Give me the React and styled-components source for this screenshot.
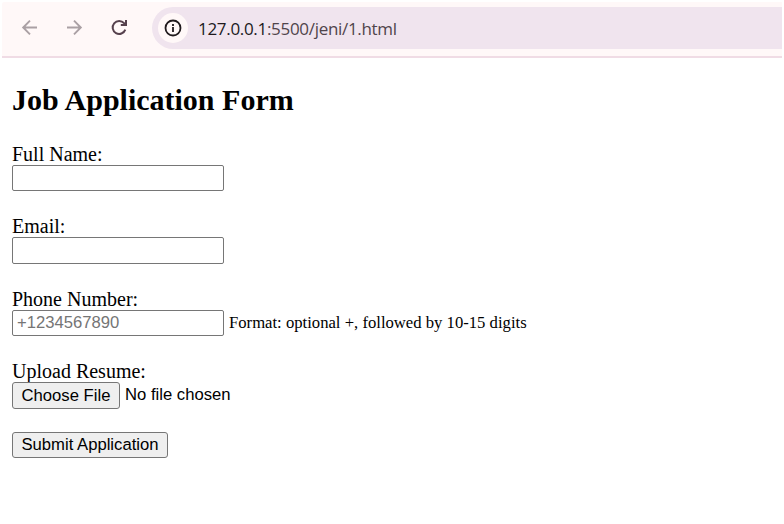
import React from "react";
import styled, { createGlobalStyle } from "styled-components";

const GlobalStyle = createGlobalStyle`
  * { box-sizing: border-box; }
  body { margin: 0; background: #fff; color: #000; overflow: hidden; }
`;

const Window = styled.div`
  width: 784px;
  height: 524px;
  padding: 2px 2px 0;
  background: #fff;
`;

const Toolbar = styled.header`
  display: flex;
  align-items: center;
  height: 56px;
  padding: 0 0 2px 18px;
  background: #fff8f8;
  border-bottom: 2px solid #f0dce5;
  border-top-left-radius: 2px;
`;

const NavButton = styled.button`
  display: grid;
  place-items: center;
  width: 20px;
  height: 20px;
  margin-right: ${(p) => p.$gap}px;
  padding: 0;
  border: 0;
  background: none;
  color: ${(p) => (p.$active ? "#56414d" : "#aaa0a4")};

  svg { display: block; }
`;

const AddressBar = styled.div`
  flex: 1;
  display: flex;
  align-items: center;
  height: 42px;
  padding-left: 6px;
  background: #f0e4ee;
  border-radius: 21px 0 0 21px;
`;

const SiteInfo = styled.span`
  display: grid;
  place-items: center;
  width: 30px;
  height: 30px;
  margin-right: 10px;
  border-radius: 50%;
  background: #fff8f8;
  color: #201a1d;
`;

const Url = styled.span`
  padding-top: 2px;
  font: 17px/24px "Open Sans", sans-serif;
  letter-spacing: -0.31px;
  color: #50444b;
  white-space: nowrap;
`;

const Host = styled.span`
  color: #201a1d;
`;

const Page = styled.main`
  padding: 25px 10px 0;
  font: 20px/23px "Liberation Serif", serif;
`;

const Title = styled.h2`
  margin: 0 0 25px;
  font-size: 30px;
  line-height: 34px;
  font-weight: 700;
`;

const Field = styled.div`
  height: ${(p) => p.$height}px;
`;

const Label = styled.label`
  display: block;
  height: 23px;
  line-height: 25px;
`;

const Row = styled.div`
  display: flex;
  align-items: center;
`;

const Input = styled.input`
  width: 212px;
  height: ${(p) => p.$height || 26}px;
  margin: 0;
  padding: 1px 4px;
  border: 1px solid #767676;
  border-radius: 2px;
  background: #fff;
  font: 16.67px "Liberation Sans", sans-serif;

  &::placeholder { color: #757575; opacity: 1; }
`;

const Hint = styled.small`
  margin: -2px 0 0 5px;
  font-size: 16.67px;
`;

const Button = styled.button`
  width: ${(p) => p.$width}px;
  height: ${(p) => p.$height}px;
  padding: 0;
  border: 1px solid #767676;
  border-radius: 3px;
  background: #efefef;
  color: #000;
  font: 16.67px/20px "Liberation Sans", sans-serif;
  white-space: nowrap;
`;

const FileName = styled.span`
  margin: -2px 0 0 5px;
  font: 16.67px/20px "Liberation Sans", sans-serif;
`;

const Arrow = ({ forward }) => (
  <svg width="20" height="20" viewBox="0 0 20 20" fill="none" stroke="currentColor" strokeWidth="1.9">
    <path d={forward ? "M2 9.5H15.5M9 2.7l6.8 6.8L9 16.3" : "M17 9.5H3.5M10 2.7L3.2 9.5l6.8 6.8"} />
  </svg>
);

export default function App() {
  return (
    <Window>
      <GlobalStyle />
      <Toolbar>
        <NavButton $gap={25} aria-label="Back"><Arrow /></NavButton>
        <NavButton $gap={24} aria-label="Forward"><Arrow forward /></NavButton>
        <NavButton $gap={23} $active aria-label="Reload">
          <svg width="20" height="20" viewBox="0 0 20 20" fill="none" stroke="currentColor" strokeWidth="2">
            <path d="M16.3 11.6A6.5 6.5 0 1 1 15.1 5.2L16.8 7" />
            <path d="M12 7.9H18V2L15.9 4.1V5.9H12z" fill="currentColor" stroke="none" />
            <path d="M17 2V6.9H11.8" />
          </svg>
        </NavButton>
        <AddressBar>
          <SiteInfo>
            <svg width="18" height="18" viewBox="0 0 18 18" fill="none" stroke="currentColor" strokeWidth="1.8">
              <circle cx="9" cy="9" r="7.5" />
              <path d="M9 8v5M9 5v2" />
            </svg>
          </SiteInfo>
          <Url><Host>127.0.0.1</Host>:5500/jeni/1.html</Url>
        </AddressBar>
      </Toolbar>
      <Page>
        <Title>Job Application Form</Title>
        <Field $height={72}>
          <Label htmlFor="name">Full Name:</Label>
          <Row><Input id="name" /></Row>
        </Field>
        <Field $height={73}>
          <Label htmlFor="email">Email:</Label>
          <Row><Input id="email" type="email" $height={27} /></Row>
        </Field>
        <Field $height={72}>
          <Label htmlFor="phone">Phone Number:</Label>
          <Row>
            <Input id="phone" type="tel" placeholder="+1234567890" />
            <Hint>Format: optional +, followed by 10-15 digits</Hint>
          </Row>
        </Field>
        <Field $height={73}>
          <Label>Upload Resume:</Label>
          <Row>
            <Button type="button" $width={108} $height={27}>Choose File</Button>
            <FileName>No file chosen</FileName>
          </Row>
        </Field>
        <Button type="submit" $width={156} $height={26}>Submit Application</Button>
      </Page>
    </Window>
  );
}
